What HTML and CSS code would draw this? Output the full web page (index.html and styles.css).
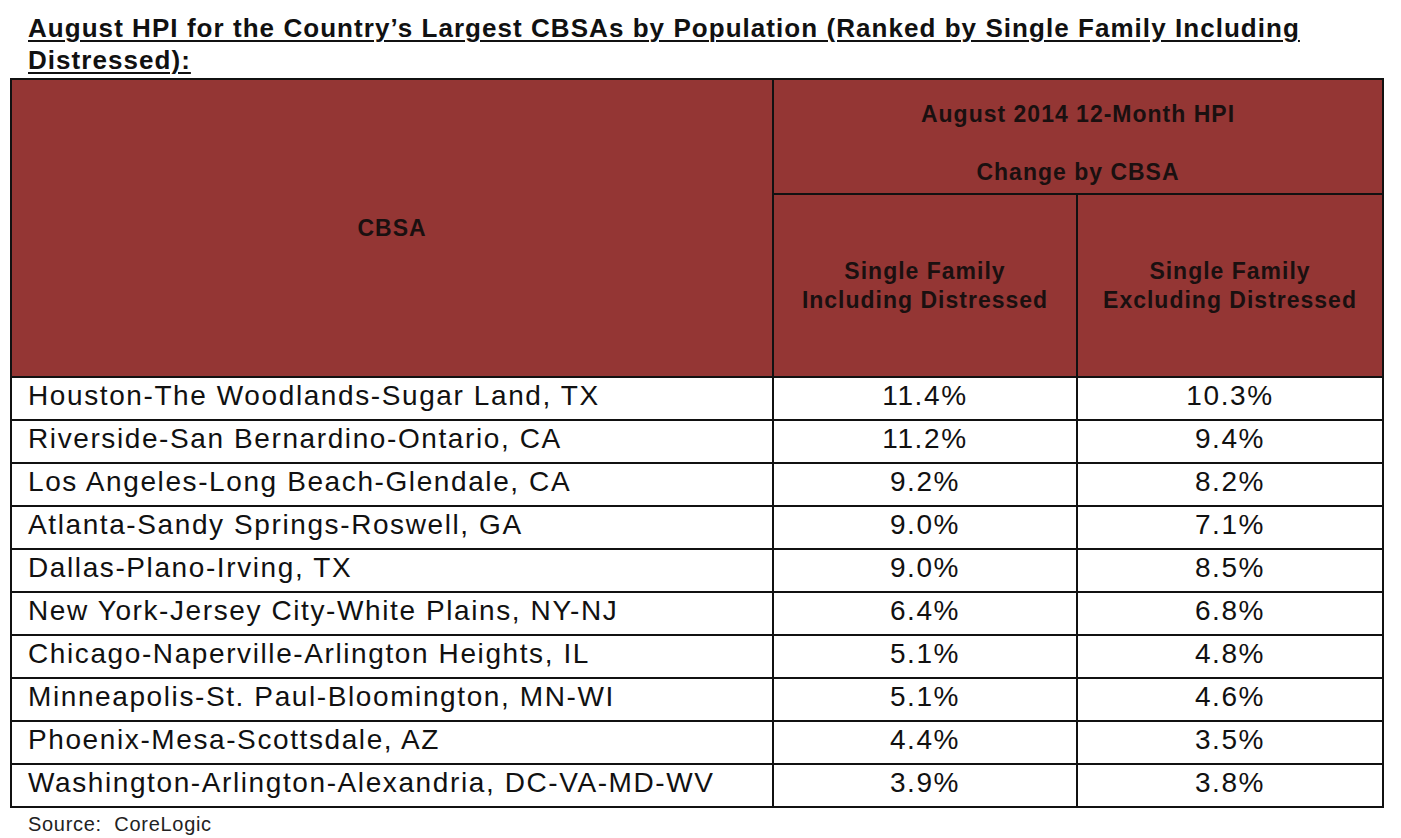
FILE: index.html
```html
<!DOCTYPE html>
<html>
<head>
<meta charset="utf-8">
<link rel="stylesheet" href="styles.css">
</head>
<body>
<div class="page">
  <h1 class="title">August HPI for the Country’s Largest CBSAs by Population (Ranked by Single Family Including Distressed):</h1>
  <table class="hpi">
    <colgroup>
      <col class="c-name">
      <col class="c-val">
      <col class="c-val2">
    </colgroup>
    <thead>
      <tr class="h-top">
        <th rowspan="2" class="h-cbsa">CBSA</th>
        <th colspan="2" class="h-group"><p>August 2014 12-Month HPI</p><p>Change by CBSA</p></th>
      </tr>
      <tr class="h-sub">
        <th>Single Family<br>Including Distressed</th>
        <th>Single Family<br>Excluding Distressed</th>
      </tr>
    </thead>
    <tbody>
      <tr><td>Houston-The Woodlands-Sugar Land, TX</td><td class="num">11.4%</td><td class="num">10.3%</td></tr>
      <tr><td>Riverside-San Bernardino-Ontario, CA</td><td class="num">11.2%</td><td class="num">9.4%</td></tr>
      <tr><td>Los Angeles-Long Beach-Glendale, CA</td><td class="num">9.2%</td><td class="num">8.2%</td></tr>
      <tr><td>Atlanta-Sandy Springs-Roswell, GA</td><td class="num">9.0%</td><td class="num">7.1%</td></tr>
      <tr><td>Dallas-Plano-Irving, TX</td><td class="num">9.0%</td><td class="num">8.5%</td></tr>
      <tr><td>New York-Jersey City-White Plains, NY-NJ</td><td class="num">6.4%</td><td class="num">6.8%</td></tr>
      <tr><td>Chicago-Naperville-Arlington Heights, IL</td><td class="num">5.1%</td><td class="num">4.8%</td></tr>
      <tr><td>Minneapolis-St. Paul-Bloomington, MN-WI</td><td class="num">5.1%</td><td class="num">4.6%</td></tr>
      <tr><td>Phoenix-Mesa-Scottsdale, AZ</td><td class="num">4.4%</td><td class="num">3.5%</td></tr>
      <tr><td>Washington-Arlington-Alexandria, DC-VA-MD-WV</td><td class="num">3.9%</td><td class="num">3.8%</td></tr>
    </tbody>
  </table>
  <p class="source">Source:&nbsp; CoreLogic</p>
</div>
</body>
</html>
```

FILE: styles.css
```css
html, body {
  margin: 0;
  padding: 0;
  background: #ffffff;
}

body {
  font-family: "Liberation Sans", Arial, sans-serif;
  color: #111111;
}

.page {
  padding: 12px 0 0 10px;
  width: 1373px;
}

.title {
  margin: 0 0 2px 18px;
  font-size: 26px;
  line-height: 32px;
  font-weight: bold;
  letter-spacing: 1.05px;
  text-decoration: underline;
  text-decoration-thickness: 2px;
  text-underline-offset: 3px;
  color: #111111;
  width: 1300px;
}

.hpi {
  border-collapse: collapse;
  width: 1372px;
  table-layout: fixed;
  border: 2px solid #111111;
}

.c-name { width: 762px; }
.c-val { width: 304px; }
.c-val2 { width: 306px; }

.hpi th {
  background: #943634;
  border: 2px solid #111111;
  font-weight: bold;
  font-size: 23px;
  line-height: 29px;
  letter-spacing: 1px;
  color: #1a1010;
  text-align: center;
  vertical-align: middle;
  padding: 0;
}

.h-top th.h-group {
  height: 113px;
  vertical-align: top;
}

.h-group p {
  margin: 0;
  line-height: 29px;
}

.h-group p:first-child {
  margin-top: 20px;
}

.h-group p + p {
  margin-top: 29px;
}

.h-sub th {
  height: 181px;
}

.hpi td {
  border: 2px solid #111111;
  height: 36px;
  padding: 0 0 5px 16px;
  font-size: 28px;
  line-height: 30px;
  letter-spacing: 1.6px;
  color: #111111;
  white-space: nowrap;
}

.hpi td.num {
  text-align: center;
  padding-left: 0;
}

.source {
  margin: 4px 0 0 18px;
  font-size: 20px;
  line-height: 24px;
  letter-spacing: 0.7px;
  color: #222222;
}
```
